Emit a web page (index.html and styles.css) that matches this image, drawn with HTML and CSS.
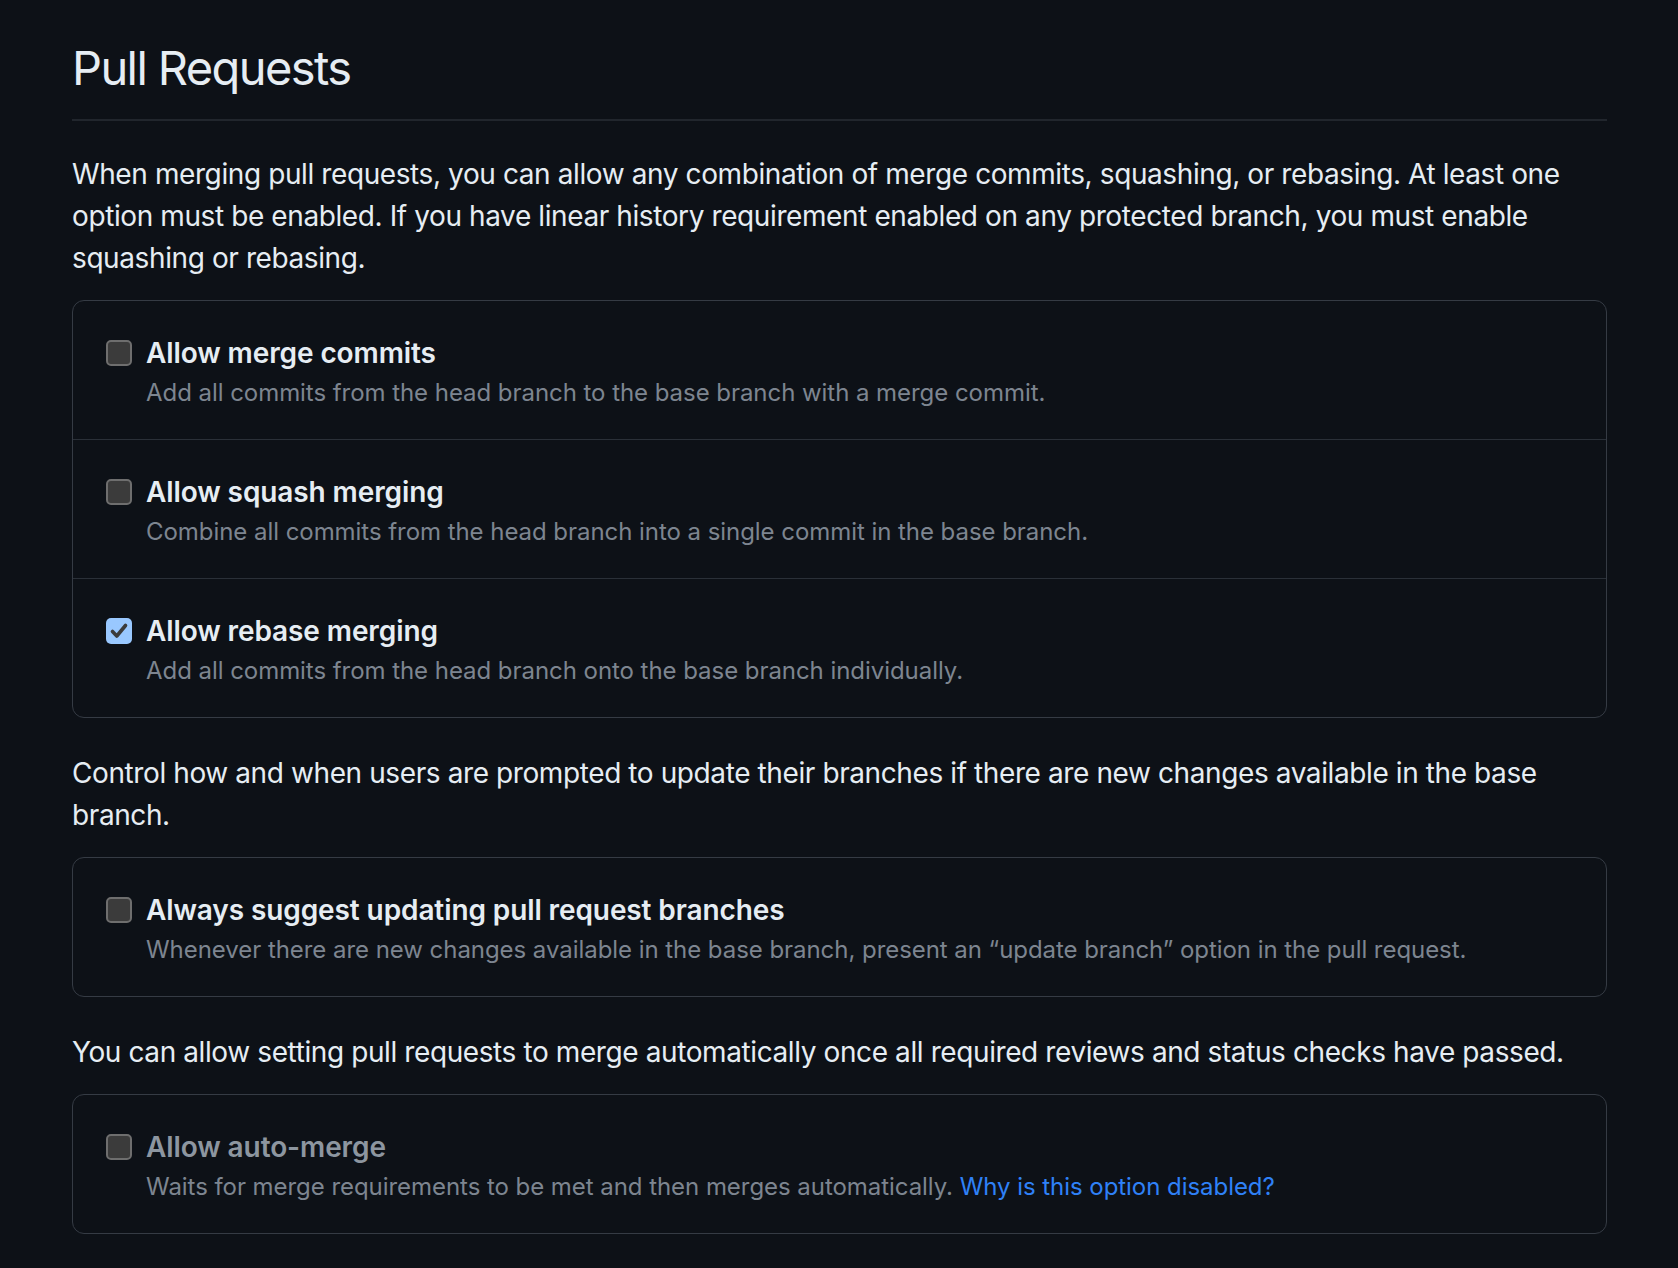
FILE: index.html
```html
<!DOCTYPE html>
<html lang="en">
<head>
<meta charset="utf-8">
<title>Pull Requests</title>
<link rel="stylesheet" href="styles.css">
</head>
<body>
<main class="page">
  <h2 class="section-title">Pull Requests</h2>

  <p class="lead">When merging pull requests, you can allow any combination of merge commits, squashing, or rebasing. At least one option must be enabled. If you have linear history requirement enabled on any protected branch, you must enable squashing or rebasing.</p>

  <div class="box">
    <div class="box-row">
      <span class="checkbox"></span>
      <div class="option">
        <div class="option-title">Allow merge commits</div>
        <div class="option-note">Add all commits from the head branch to the base branch with a merge commit.</div>
      </div>
    </div>
    <div class="box-row">
      <span class="checkbox"></span>
      <div class="option">
        <div class="option-title">Allow squash merging</div>
        <div class="option-note">Combine all commits from the head branch into a single commit in the base branch.</div>
      </div>
    </div>
    <div class="box-row">
      <span class="checkbox checked">
        <svg viewBox="0 0 26 26" width="26" height="26" aria-hidden="true"><path d="M6.5 13.5 L10.8 18 L19.5 7.5" fill="none" stroke="#3b3b3b" stroke-width="3.6" stroke-linecap="round" stroke-linejoin="round"/></svg>
      </span>
      <div class="option">
        <div class="option-title">Allow rebase merging</div>
        <div class="option-note">Add all commits from the head branch onto the base branch individually.</div>
      </div>
    </div>
  </div>

  <p class="lead">Control how and when users are prompted to update their branches if there are new changes available in the base branch.</p>

  <div class="box">
    <div class="box-row">
      <span class="checkbox"></span>
      <div class="option">
        <div class="option-title">Always suggest updating pull request branches</div>
        <div class="option-note">Whenever there are new changes available in the base branch, present an “update branch” option in the pull request.</div>
      </div>
    </div>
  </div>

  <p class="lead">You can allow setting pull requests to merge automatically once all required reviews and status checks have passed.</p>

  <div class="box">
    <div class="box-row">
      <span class="checkbox"></span>
      <div class="option">
        <div class="option-title disabled">Allow auto-merge</div>
        <div class="option-note">Waits for merge requirements to be met and then merges automatically. <a class="link" href="#">Why is this option disabled?</a></div>
      </div>
    </div>
  </div>
</main>
</body>
</html>
```

FILE: styles.css
```css
html, body {
  margin: 0;
  padding: 0;
  background: #0d1117;
}

body {
  color: #e6edf3;
  font-family: Inter, "Noto Sans", "Liberation Sans", sans-serif;
  font-size: 28px;
  line-height: 42px;
}

.page {
  width: 1535px;
  padding: 32px 0 40px 72px;
}

.section-title {
  margin: 0;
  padding-bottom: 15px;
  border-bottom: 2px solid #21262d;
  font-size: 47px;
  line-height: 72px;
  font-weight: 400;
  letter-spacing: -1.6px;
}

.lead {
  margin: 32px 0 21px;
  letter-spacing: -0.4px;
}

.box + .lead {
  margin-top: 34px;
}

.box {
  border: 1px solid #353b44;
  border-radius: 12px;
}

.box-row {
  display: flex;
  align-items: flex-start;
  gap: 14px;
  padding: 31px 32px 31px 33px;
}

.box-row + .box-row {
  border-top: 1px solid #2a3038;
}

.checkbox {
  flex: none;
  box-sizing: border-box;
  width: 26px;
  height: 26px;
  margin-top: 8px;
  border: 2px solid #6e6e6e;
  border-radius: 5px;
  background: #3b3b3b;
  display: flex;
}

.checkbox.checked {
  border: none;
  background: #99c8ff;
}

.option-title {
  font-size: 28px;
  line-height: 42px;
  font-weight: 600;
  letter-spacing: -0.1px;
}

.option-title.disabled {
  color: #8d96a0;
}

.option-note {
  margin-top: 3px;
  font-size: 24px;
  line-height: 31px;
  color: #7d8590;
  letter-spacing: -0.05px;
}

.link {
  color: #2f81f7;
  text-decoration: none;
}
```
